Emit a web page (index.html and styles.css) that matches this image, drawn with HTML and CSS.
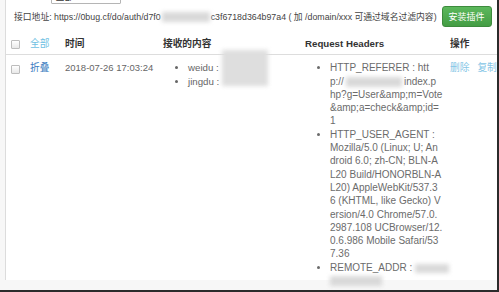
FILE: index.html
```
<!DOCTYPE html>
<html lang="zh-CN">
<head>
<meta charset="utf-8">
<title>Request log</title>
<link rel="stylesheet" href="styles.css">
</head>
<body>
<div class="frame">
  <div class="panel">
    <div class="domain-row">
      <span class="label">Domain:</span>
      <span class="select">全部</span>
    </div>
    <div class="api-row">
      <span class="api-text">接口地址: https://0bug.cf/do/auth/d7f0<span class="redact redact-url"></span>c3f6718d364b97a4 ( 加 /domain/xxx 可通过域名过滤内容)</span>
      <button class="btn-install">安装插件</button>
    </div>
    <table class="log">
      <colgroup>
        <col class="c-check"><col class="c-toggle"><col class="c-time"><col class="c-content"><col class="c-headers"><col class="c-ops">
      </colgroup>
      <thead>
        <tr>
          <th><span class="checkbox"></span></th>
          <th><a class="link-all">全部</a></th>
          <th>时间</th>
          <th>接收的内容</th>
          <th>Request Headers</th>
          <th>操作</th>
        </tr>
      </thead>
      <tbody>
        <tr>
          <td><span class="checkbox"></span></td>
          <td><a class="link-fold">折叠</a></td>
          <td class="time">2018-07-26 17:03:24</td>
          <td class="content-cell">
            <ul class="kv">
              <li>weidu :</li>
              <li>jingdu :</li>
            </ul>
            <span class="redact redact-content"></span>
          </td>
          <td>
            <ul class="kv headers">
              <li>HTTP_REFERER : htt<br>p://<span class="redact redact-host"></span>index.p<br>hp?g=User&amp;amp;m=Vote<br>&amp;amp;a=check&amp;amp;id=<br>1</li>
              <li>HTTP_USER_AGENT :<br>Mozilla/5.0 (Linux; U; An<br>droid 6.0; zh-CN; BLN-A<br>L20 Build/HONORBLN-A<br>L20) AppleWebKit/537.3<br>6 (KHTML, like Gecko) V<br>ersion/4.0 Chrome/57.0.<br>2987.108 UCBrowser/12.<br>0.6.986 Mobile Safari/53<br>7.36</li>
              <li>REMOTE_ADDR : <span class="redact redact-ip1"></span><br><span class="redact redact-ip2"></span></li>
            </ul>
          </td>
          <td class="ops"><a class="link-op">删除</a><a class="link-op">复制</a></td>
        </tr>
      </tbody>
    </table>
  </div>
</div>
</body>
</html>
```
FILE: styles.css
```
html, body {
  margin: 0;
  padding: 0;
  background: #fff;
}
.frame {
  width: 499px;
  height: 292px;
  box-sizing: border-box;
  overflow: hidden;
  border-right: 2px solid #2b2b2b;
  border-bottom: 2px solid #2b2b2b;
  background: #f7f7f7;
  padding-left: 5px;
  font-family: "Liberation Sans", "Noto Sans CJK SC", sans-serif;
  color: #555;
}
.panel {
  background: #fff;
  border-left: 1px solid #dcdcdc;
  height: 100%;
  margin-top: -10px;
}
.domain-row {
  display: flex;
  align-items: center;
  gap: 3px;
  padding-left: 8px;
  height: 14px;
  font-size: 9px;
  color: #444;
}
.label {
  flex: none;
}
.select {
  flex: none;
  display: inline-block;
  width: 64px;
  height: 12px;
  border: 1px solid #b5b5b5;
  border-radius: 1px;
  padding-left: 4px;
  font-size: 9px;
  line-height: 12px;
  color: #333;
}
.api-row {
  display: flex;
  align-items: center;
  gap: 5px;
  padding: 2px 0 0 8px;
  height: 20px;
}
.api-text {
  font-size: 8.8px;
  color: #444;
  white-space: nowrap;
}
.redact {
  display: inline-block;
  background: #d9d9d9;
  filter: blur(2px);
  vertical-align: middle;
}
.redact-url {
  width: 48px;
  height: 10px;
  margin: 0 1px;
}
.btn-install {
  height: 21px;
  padding: 0 6px;
  border: 1px solid #3d8b3d;
  border-radius: 3px;
  background: linear-gradient(#5cb85c, #449d44);
  color: #fff;
  font-family: "Liberation Sans", "Noto Sans CJK SC", sans-serif;
  font-size: 9px;
}
.log {
  margin-top: 7px;
  border-collapse: collapse;
  table-layout: fixed;
  width: 509px;
  font-size: 9.7px;
  line-height: 13.3px;
}
.c-check { width: 19px; }
.c-toggle { width: 35px; }
.c-time { width: 98px; }
.c-content { width: 142px; }
.c-headers { width: 145px; }
.c-ops { width: 70px; }
.log th {
  text-align: left;
  font-weight: bold;
  color: #333;
  padding: 4px 5px 4px;
  border-bottom: 1px solid #ddd;
  vertical-align: middle;
  white-space: nowrap;
}
.log td {
  padding: 6px 5px 5px;
  vertical-align: top;
  color: #666;
}
.log td.time {
  white-space: nowrap;
  font-size: 9.5px;
}
.checkbox {
  display: inline-block;
  width: 7px;
  height: 7px;
  border: 1px solid #bdbdbd;
  border-radius: 1px;
  background: linear-gradient(#fff, #e8e8e8);
  vertical-align: middle;
}
.log td .checkbox {
  margin-top: 2px;
}
.link-all {
  color: #6fc1e3;
  font-weight: normal;
}
.link-fold {
  color: #3b7dbf;
}
.kv {
  margin: 0;
  padding-left: 25px;
}
.headers {
  font-size: 10px;
  white-space: nowrap;
  color: #6b6b6b;
}
.content-cell {
  position: relative;
}
.redact-content {
  position: absolute;
  left: 64px;
  top: -5px;
  width: 46px;
  height: 36px;
  background: #dedede;
}
.redact-host {
  width: 56px;
  height: 10px;
  margin: 0 2px;
}
.redact-ip1 {
  width: 34px;
  height: 9px;
}
.redact-ip2 {
  width: 52px;
  height: 10px;
}
.ops {
  white-space: nowrap;
}
.link-op {
  color: #86c6e6;
  margin-right: 8px;
}
```
